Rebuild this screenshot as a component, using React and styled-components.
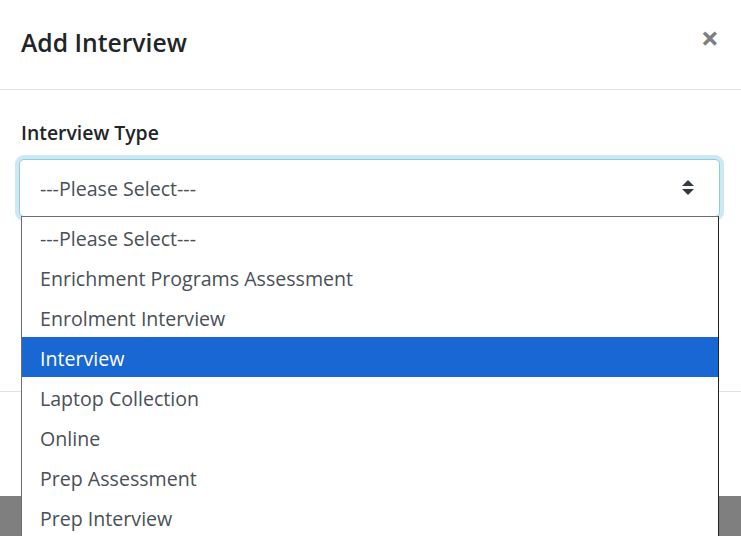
import styled, { createGlobalStyle } from "styled-components";

const options = [
  "---Please Select---",
  "Enrichment Programs Assessment",
  "Enrolment Interview",
  "Interview",
  "Laptop Collection",
  "Online",
  "Prep Assessment",
  "Prep Interview",
];

const selected = "Interview";

const GlobalStyle = createGlobalStyle`
  html {
    overflow: hidden;
  }
  body {
    margin: 0;
    padding: 0;
    background: #7f7f7f;
    font-family: "Open Sans", "Noto Sans", sans-serif;
  }
`;

export default function App() {
  return (
    <Page>
      <GlobalStyle />
      <Modal>
        <Header>
          <Title>Add Interview</Title>
          <CloseButton aria-label="Close">×</CloseButton>
        </Header>

        <Body>
          <Label>Interview Type</Label>
          <SelectWrapper>
            <SelectBox>
              ---Please Select---
              <svg width="12" height="16" viewBox="0 0 12 16">
                <path d="M6 0 L12 6 L0 6 Z" fill="#343a40" />
                <path d="M0 9 L12 9 L6 15 Z" fill="#343a40" />
              </svg>
            </SelectBox>
            <OptionList>
              {options.map((option) => (
                <Option key={option} active={option === selected}>
                  {option}
                </Option>
              ))}
            </OptionList>
          </SelectWrapper>
        </Body>

        <Footer />
      </Modal>
      <Backdrop />
    </Page>
  );
}

const Page = styled.div`
  height: 560px;
  display: flex;
  flex-direction: column;
`;

const Modal = styled.div`
  background: #fff;
  height: 496px;
  flex-shrink: 0;
  display: flex;
  flex-direction: column;
`;

const Backdrop = styled.div`
  flex: 1;
  background: #7f7f7f;
`;

const Header = styled.div`
  box-sizing: border-box;
  height: 90px;
  padding: 0 21px 4px 21px;
  display: flex;
  align-items: center;
  justify-content: space-between;
  border-bottom: 1px solid #dee2e6;
`;

const Title = styled.h5`
  margin: 0;
  font-size: 24.7px;
  font-weight: 600;
  line-height: 1.5;
  color: #212529;
`;

const CloseButton = styled.button`
  border: none;
  background: transparent;
  padding: 0 0 9px 0;
  margin-right: 1px;
  font-family: "Open Sans", sans-serif;
  font-size: 32px;
  font-weight: 700;
  line-height: 1;
  color: #000;
  opacity: 0.5;
  cursor: pointer;
`;

const Body = styled.div`
  box-sizing: border-box;
  height: 301px;
  padding: 28px 21px 0 19px;
`;

const Label = styled.label`
  display: block;
  margin: 0 0 12px 2px;
  font-size: 19.4px;
  font-weight: 600;
  line-height: 1.5;
  color: #212529;
`;

const SelectWrapper = styled.div`
  position: relative;
  z-index: 10;
`;

const SelectBox = styled.div`
  box-sizing: border-box;
  height: 58px;
  padding: 0 25px 0 20px;
  display: flex;
  align-items: center;
  justify-content: space-between;
  border: 1px solid #8fcbe2;
  border-radius: 5px;
  box-shadow: 0 0 0 4px #cbe8f3;
  font-size: 19.6px;
  color: #495057;
  background: #fff;
`;

const OptionList = styled.ul`
  position: absolute;
  top: 57px;
  left: 2px;
  right: 1px;
  margin: 0;
  padding: 0;
  list-style: none;
  background: #fff;
  border: 1px solid #6e6e6e;
  border-right-color: #222;
`;

const Option = styled.li`
  height: 40px;
  padding: 2px 0 0 18px;
  box-sizing: border-box;
  display: flex;
  align-items: center;
  font-size: 19.6px;
  color: ${(props) => (props.active ? "#fff" : "#495057")};
  background: ${(props) => (props.active ? "#1967d2" : "#fff")};
`;

const Footer = styled.div`
  flex: 1;
  border-top: 1px solid #dee2e6;
`;
